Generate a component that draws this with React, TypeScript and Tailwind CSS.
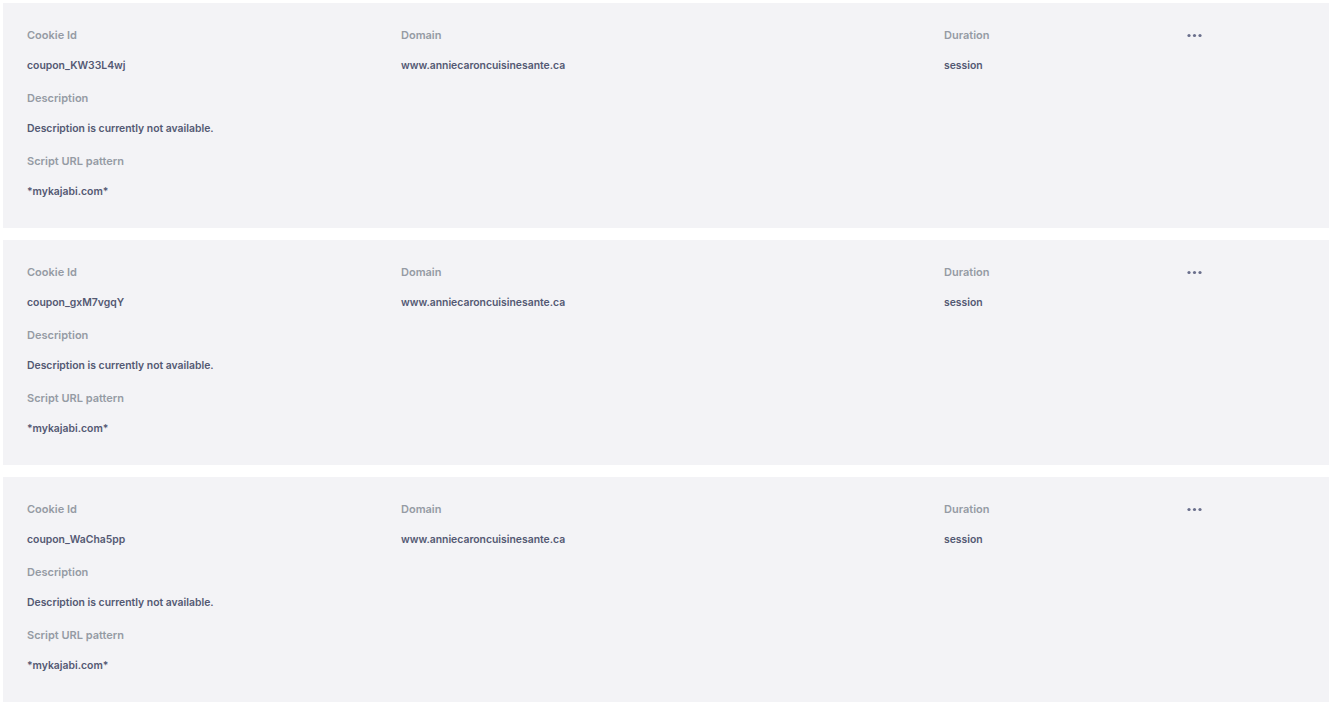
type Cookie = {
  id: string;
  domain: string;
  duration: string;
  description: string;
  pattern: string;
};

const cookies: Cookie[] = [
  {
    id: 'coupon_KW33L4wj',
    domain: 'www.anniecaroncuisinesante.ca',
    duration: 'session',
    description: 'Description is currently not available.',
    pattern: '*mykajabi.com*',
  },
  {
    id: 'coupon_gxM7vgqY',
    domain: 'www.anniecaroncuisinesante.ca',
    duration: 'session',
    description: 'Description is currently not available.',
    pattern: '*mykajabi.com*',
  },
  {
    id: 'coupon_WaCha5pp',
    domain: 'www.anniecaroncuisinesante.ca',
    duration: 'session',
    description: 'Description is currently not available.',
    pattern: '*mykajabi.com*',
  },
];

function Label({ children }: { children: React.ReactNode }) {
  return <div className="h-[30px] flex items-center text-[11px] font-semibold text-[#959ba4]">{children}</div>;
}

function Value({ children }: { children: React.ReactNode }) {
  return (
    <div className="h-[30px] pt-[2px] mb-[3px] flex items-center text-[10.4px] font-semibold text-[#535973]">
      {children}
    </div>
  );
}

function Dots() {
  return (
    <svg width="15" height="5" viewBox="0 0 15 5" className="text-[#6a6f8c]">
      <circle cx="2" cy="2.5" r="1.6" fill="currentColor" />
      <circle cx="7.5" cy="2.5" r="1.6" fill="currentColor" />
      <circle cx="13" cy="2.5" r="1.6" fill="currentColor" />
    </svg>
  );
}

function CookieCard({ cookie }: { cookie: Cookie }) {
  return (
    <div className="bg-[#f3f3f6] h-[225px] pl-6 pt-[17px]">
      <div className="flex">
        <div className="w-[374px]">
          <Label>Cookie Id</Label>
          <Value>{cookie.id}</Value>
        </div>
        <div className="w-[543px]">
          <Label>Domain</Label>
          <Value>{cookie.domain}</Value>
        </div>
        <div className="w-[243px]">
          <Label>Duration</Label>
          <Value>{cookie.duration}</Value>
        </div>
        <div className="h-[30px] flex items-center">
          <Dots />
        </div>
      </div>
      <Label>Description</Label>
      <Value>{cookie.description}</Value>
      <Label>Script URL pattern</Label>
      <Value>{cookie.pattern}</Value>
    </div>
  );
}

export default function App() {
  return (
    <div className="bg-white min-h-screen p-[3px] font-['Inter',sans-serif]">
      <div className="flex flex-col gap-3">
        {cookies.map((c) => (
          <CookieCard key={c.id} cookie={c} />
        ))}
      </div>
    </div>
  );
}
